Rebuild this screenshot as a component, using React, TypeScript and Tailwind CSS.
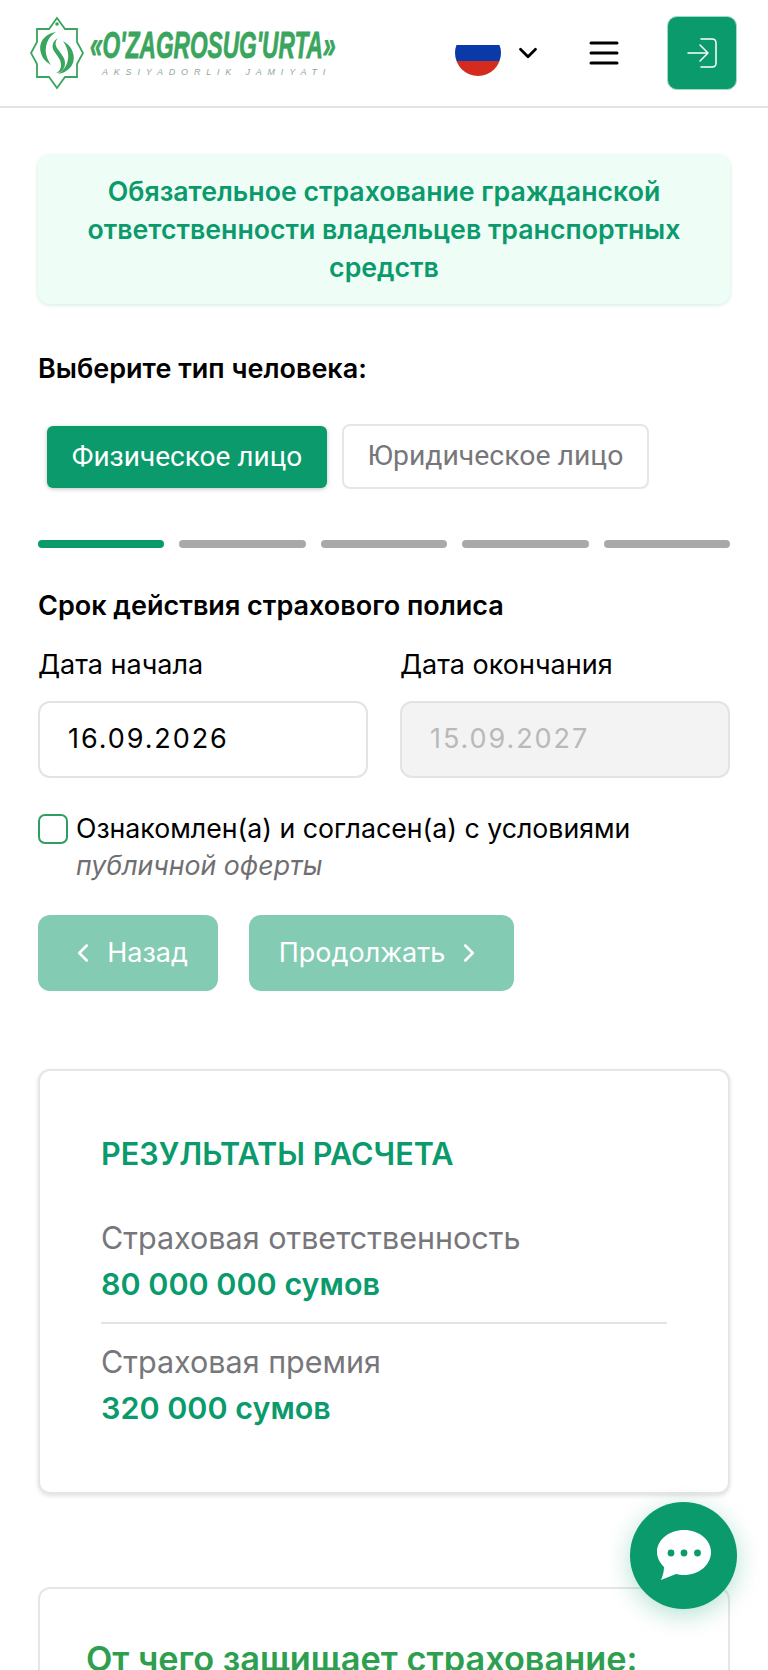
import { ChevronDown, ChevronLeft, ChevronRight } from 'lucide-react'

const STEPS = [true, false, false, false, false]

function Logo() {
  return (
    <div className="flex items-center">
      <svg width="54" height="76" viewBox="0 0 54 76" fill="none">
        <path
          d="M27 3 L35 14 L47 14 L47 27 L53 38 L47 49 L47 62 L35 62 L27 73 L19 62 L7 62 L7 49 L1 38 L7 27 L7 14 L19 14 Z"
          stroke="#3aa55c"
          strokeWidth="1.8"
        />
        <circle cx="27" cy="9" r="1.8" fill="#3aa55c" />
        <path d="M26 17 C14 19 8 28 11 38 C12 43 16 47 21 50 C17 44 15 38 16 32 C17 25 21 20 26 17 Z" fill="#3aa55c" />
        <path d="M28 23 C23 26 21 31 24 36 C27 41 31 44 31 50 C31 54 29 57 26 58 C32 58 35 53 35 48 C35 42 30 38 27 33 C25 30 25 26 28 23 Z" fill="#3aa55c" />
        <path d="M28 59 C40 57 46 48 43 38 C42 33 38 29 33 26 C37 32 39 38 38 44 C37 51 33 56 28 59 Z" fill="#3aa55c" />
      </svg>
      <div className="ml-[6px] flex w-[246px] flex-col items-start">
        <span className="inline-block origin-left scale-x-[0.63] font-['Liberation_Sans',sans-serif] text-[36px] leading-[34px] font-bold italic text-[#3aa55c] whitespace-nowrap [-webkit-text-stroke:0.8px_#3aa55c]">
          «O'ZAGROSUG'URTA»
        </span>
        <span className="mt-[3px] ml-[12px] font-['Liberation_Sans',sans-serif] text-[9px] leading-[12px] italic tracking-[5.8px] text-[#8fa897] whitespace-nowrap">
          AKSIYADORLIK JAMIYATI
        </span>
      </div>
    </div>
  )
}

function Flag() {
  return (
    <div className="flex h-[46px] w-[46px] flex-col overflow-hidden rounded-full">
      <div className="h-[15px] bg-white" />
      <div className="h-[16px] bg-[#0a39a8]" />
      <div className="h-[15px] bg-[#d52b1e]" />
    </div>
  )
}

function Header() {
  return (
    <header className="flex h-[108px] items-center justify-between border-b-2 border-[#e4e4e4] bg-white pr-[31px] pl-[30px]">
      <Logo />
      <div className="flex items-center">
        <Flag />
        <ChevronDown className="ml-[12px] h-[30px] w-[30px] text-black" strokeWidth={2.2} />
        <svg className="ml-[46px]" width="30" height="24" viewBox="0 0 30 24" fill="none" stroke="#000" strokeWidth="3" strokeLinecap="round">
          <path d="M2 2 H28 M2 12 H28 M2 22 H28" />
        </svg>
        <button className="ml-[48px] flex h-[74px] w-[70px] items-center justify-center rounded-[10px] border border-[#9fdcc0] bg-[#0a9a6c]">
          <svg width="32" height="30" viewBox="0 0 32 30" fill="none" stroke="#fff" strokeWidth="1.5" strokeLinecap="round" strokeLinejoin="round">
            <path d="M15 1 H26 Q30 1 30 5 V25 Q30 29 26 29 H15" />
            <path d="M2 15 H21 M14 7 L22 15 L14 23" />
          </svg>
        </button>
      </div>
    </header>
  )
}

function ResultRow({ label, value }: { label: string; value: string }) {
  return (
    <div>
      <div className="text-[30.5px] leading-[38px] text-[#77777b]">{label}</div>
      <div className="mt-[7px] text-[30.5px] leading-[40px] font-semibold text-[#0a9a6c]">{value}</div>
    </div>
  )
}

export default function App() {
  return (
    <div className="relative h-[1670px] overflow-hidden bg-white font-['Inter',sans-serif] text-black">
      <Header />

      <main className="px-[38px]">
        <div className="mt-[47px] rounded-[12px] bg-[#eefdf5] px-[30px] pt-[17px] pb-[18px] text-center text-[26.7px] leading-[38px] font-semibold text-[#0a9a6c] shadow-[0_1px_4px_rgba(10,154,108,0.2)]">
          Обязательное страхование гражданской ответственности владельцев транспортных средств
        </div>

        <div className="mt-[47px] text-[27px] leading-[36px] font-semibold">Выберите тип человека:</div>

        <div className="mt-[37px] flex items-center pl-[9px]">
          <button className="h-[62px] w-[280px] rounded-[6px] bg-[#0a9a6c] font-['Roboto',sans-serif] text-[28px] text-white shadow-[0_1px_4px_rgba(0,0,0,0.25)]">
            Физическое лицо
          </button>
          <button className="ml-[15px] h-[65px] w-[307px] rounded-[8px] border-2 border-[#e6e6e8] bg-white font-['Roboto',sans-serif] text-[28.4px] text-[#77777b]">
            Юридическое лицо
          </button>
        </div>

        <div className="mt-[51px] flex gap-[15px]">
          {STEPS.map((done, i) => (
            <div key={i} className={done ? 'h-[8px] flex-1 rounded-full bg-[#0a9a6c]' : 'h-[8px] flex-1 rounded-full bg-[#a9a9a9]'} />
          ))}
        </div>

        <div className="mt-[40px] text-[27px] leading-[36px] font-semibold">Срок действия страхового полиса</div>

        <div className="mt-[23px] grid grid-cols-2 gap-x-[32px]">
          <div>
            <div className="text-[27px] leading-[36px]">Дата начала</div>
            <div className="mt-[18px] flex h-[77px] items-center rounded-[12px] border-2 border-[#e3e3e6] bg-white pl-[28px] text-[27px] tracking-[1.93px]">
              16.09.2026
            </div>
          </div>
          <div>
            <div className="text-[27px] leading-[36px]">Дата окончания</div>
            <div className="mt-[18px] flex h-[77px] items-center rounded-[12px] border-2 border-[#e3e3e6] bg-[#f3f3f3] pl-[28px] text-[27px] tracking-[1.93px] text-[#b9b9b9]">
              15.09.2027
            </div>
          </div>
        </div>

        <div className="mt-[32px] flex items-start">
          <div className="mt-[4px] h-[30px] w-[30px] shrink-0 rounded-[7px] border-2 border-[#2f9e63] bg-white" />
          <div className="ml-[8px] text-[26.7px] leading-[37px]">
            Ознакомлен(а) и согласен(а) с условиями
            <div className="italic text-[#6f6f73]">публичной оферты</div>
          </div>
        </div>

        <div className="mt-[31px] flex gap-[31px]">
          <button className="flex h-[76px] w-[180px] items-center justify-center rounded-[12px] bg-[#84cbb4] text-[27px] text-white">
            <ChevronLeft className="h-[30px] w-[30px]" strokeWidth={2} />
            <span className="ml-[9px]">Назад</span>
          </button>
          <button className="flex h-[76px] w-[265px] items-center justify-center rounded-[12px] bg-[#84cbb4] text-[27px] text-white">
            <span className="mr-[9px]">Продолжать</span>
            <ChevronRight className="h-[30px] w-[30px]" strokeWidth={2} />
          </button>
        </div>

        <section className="mt-[78px] h-[425px] rounded-[12px] border-2 border-[#e6e6e8] bg-white px-[61px] pt-[63px] shadow-[0_2px_4px_rgba(0,0,0,0.12)]">
          <h2 className="text-[30.6px] leading-[40px] font-semibold text-[#0a9a6c]">РЕЗУЛЬТАТЫ РАСЧЕТА</h2>
          <div className="mt-[45px] border-b-2 border-[#e4e4e4] pb-[18px]">
            <ResultRow label="Страховая ответственность" value="80 000 000 сумов" />
          </div>
          <div className="mt-[19px]">
            <ResultRow label="Страховая премия" value="320 000 сумов" />
          </div>
        </section>

        <section className="mt-[93px] h-[300px] rounded-[12px] border-2 border-[#e6e6e8] bg-white px-[46px] pt-[50px]">
          <h2 className="text-[34.3px] leading-[40px] font-semibold text-[#2e9e4f]">От чего защищает страхование:</h2>
        </section>
      </main>

      <button className="absolute top-[1502px] left-[630px] flex h-[107px] w-[107px] items-center justify-center rounded-full bg-[#0a9a6c] shadow-[0_6px_24px_rgba(10,154,108,0.3)]">
        <svg width="54" height="52" viewBox="0 0 54 52">
          <path d="M27 0 C42 0 54 10 54 22 C54 35 42 45 27 45 C24 45 21 44.5 19 44 L4 50 C6 45 7 41 7 37 C3 33 0 28 0 22 C0 10 12 0 27 0 Z" fill="#fff" />
          <circle cx="14" cy="23" r="3.4" fill="#0a9a6c" />
          <circle cx="27" cy="23" r="3.4" fill="#0a9a6c" />
          <circle cx="40.5" cy="23" r="3.4" fill="#0a9a6c" />
        </svg>
      </button>
    </div>
  )
}
